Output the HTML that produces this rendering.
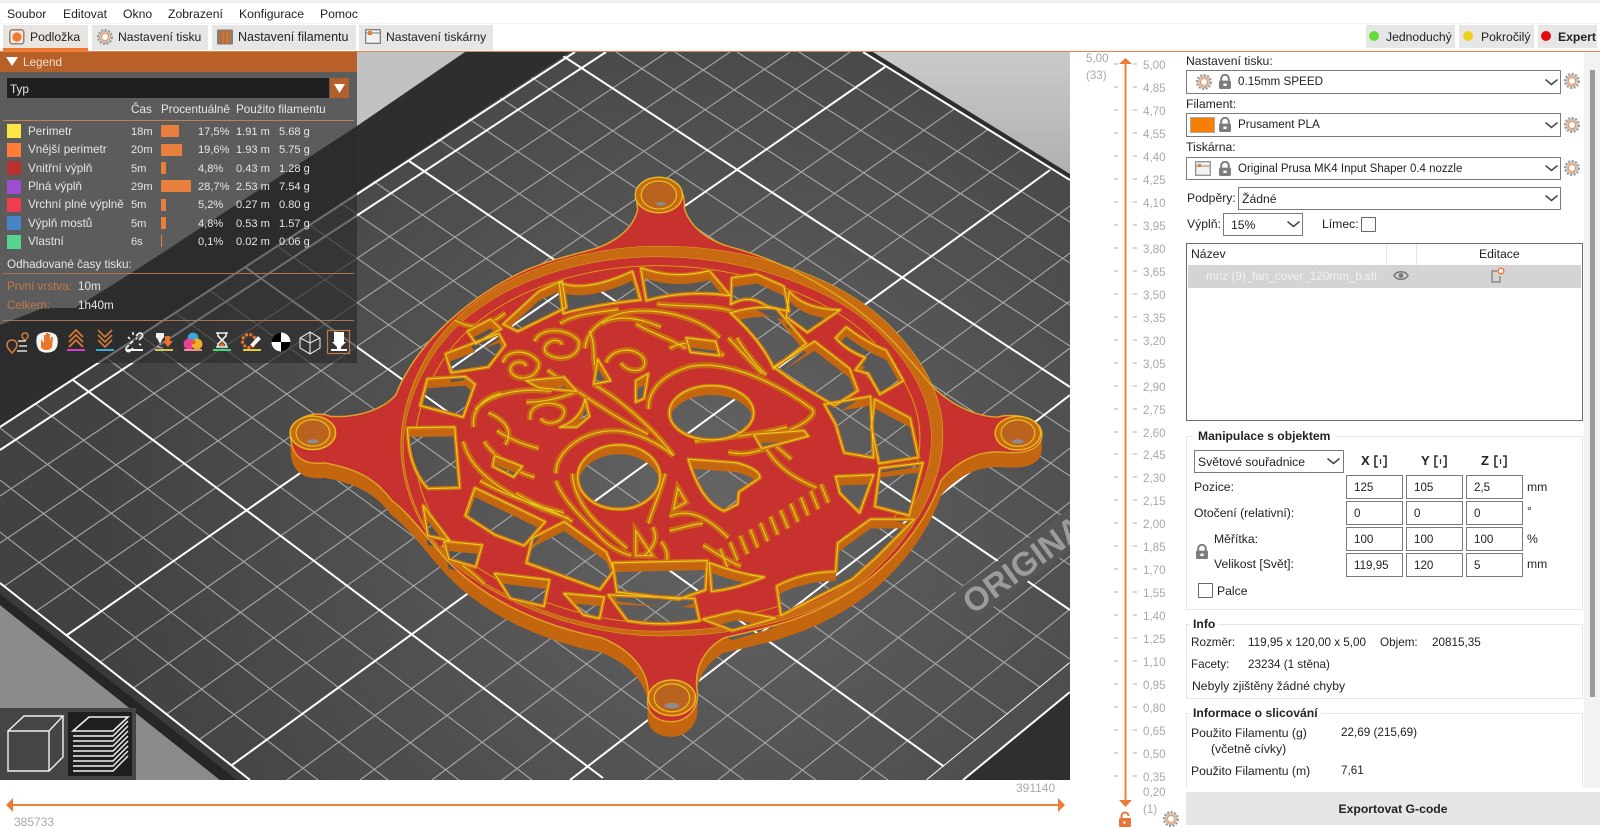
<!DOCTYPE html>
<html lang="cs"><head><meta charset="utf-8"><title>PrusaSlicer</title>
<style>
html,body{margin:0;padding:0;width:1600px;height:829px;overflow:hidden;background:#fff;font-family:"Liberation Sans",sans-serif;color:#222}
.t{position:absolute;white-space:nowrap;line-height:16px;font-size:12.2px}
.v{font-size:11.7px}
.b{position:absolute;box-sizing:border-box}
.combo{position:absolute;box-sizing:border-box;border:1px solid #7a7a7a;background:#fff}
.inp{position:absolute;box-sizing:border-box;border:1px solid #7a7a7a;width:57px;height:24px;font-size:11.6px;line-height:23px;padding-left:7px;background:#fff}
.lg{position:absolute;white-space:nowrap;line-height:14px;font-size:11.7px;color:#e6e6e6}
.n{font-size:11.1px}
.sw{position:absolute;left:7px;width:14px;height:14px}
.bar{position:absolute;left:161px;height:12px;background:#e97f3f}
svg{position:absolute;overflow:hidden}
.ns *{vector-effect:non-scaling-stroke}
</style></head><body>
<svg width="0" height="0" style="left:0;top:0"><defs>
<g id="gear"><circle cx="9" cy="9" r="7" fill="none" stroke="#9a9a9a" stroke-width="2" stroke-dasharray="2.2 1.4"/><circle cx="9" cy="9" r="5.4" fill="#f6e2d2" stroke="#9a9a9a" stroke-width=".7"/><circle cx="9" cy="9" r="3.7" fill="#fff" stroke="#ea9a66" stroke-width="1.4"/></g>
<g id="lock"><path d="M3.2 7V4.6a3.8 3.8 0 0 1 7.6 0V7" fill="none" stroke="#7d7d7d" stroke-width="2"/><rect x="1" y="6.6" width="12" height="8.4" rx="1.2" fill="#7d7d7d"/><rect x="5.4" y="9.6" width="3.2" height="2.4" fill="#fff"/></g>
<path id="chev" d="M0 0L6 5L12 0" fill="none" stroke="#444" stroke-width="1.5"/>
<g id="br"><path d="M4 1H1V12H4M9 1H12V12H9" fill="none" stroke="#333" stroke-width="1.6"/><path d="M6.5 4V9" stroke="#333" stroke-width="1.2"/></g>
</defs></svg>

<!-- menu -->
<div class="b" style="left:0;top:0;width:1600px;height:3px;background:#f0f0f0"></div>
<div class="b" style="left:0;top:23px;width:1600px;height:1px;background:#f3f3f3"></div>
<div class="t" style="left:7px;top:6px">Soubor</div>
<div class="t" style="left:63px;top:6px">Editovat</div>
<div class="t" style="left:123px;top:6px">Okno</div>
<div class="t" style="left:168px;top:6px">Zobrazení</div>
<div class="t" style="left:239px;top:6px">Konfigurace</div>
<div class="t" style="left:320px;top:6px">Pomoc</div>

<!-- tabs -->
<div class="b" style="left:3px;top:25px;width:85px;height:26px;background:#e8e4e0;border-bottom:3px solid #ee7a30"></div>
<div class="b" style="left:92px;top:25px;width:116px;height:25px;background:#e6e6e6"></div>
<div class="b" style="left:212px;top:25px;width:144px;height:25px;background:#e6e6e6"></div>
<div class="b" style="left:359px;top:25px;width:134px;height:25px;background:#e6e6e6"></div>
<svg style="left:9px;top:29px" width="16" height="16"><rect x=".8" y=".8" width="14" height="14" rx="2.5" fill="#f6e8dc" stroke="#8a7a70" stroke-width="1.4"/><circle cx="8" cy="8" r="4.6" fill="#ee7a30"/></svg>
<svg style="left:96px;top:28px" width="18" height="18"><use href="#gear"/></svg>
<svg style="left:217px;top:29px" width="16" height="16"><rect x="1" y="1" width="14" height="14" fill="#c9783f" stroke="#7d7d7d"/><path d="M4 1V15M8 1V15M12 1V15" stroke="#9a5a30" stroke-width=".7"/><rect x="0" y="1" width="2.5" height="14" fill="#7d7d7d"/><rect x="13.5" y="1" width="2.5" height="14" fill="#7d7d7d"/></svg>
<svg style="left:365px;top:29px" width="16" height="15"><rect x=".7" y=".7" width="14.6" height="13.6" fill="#f2f2f2" stroke="#777" stroke-width="1.2"/><path d="M1 4H15" stroke="#777"/><rect x="3" y="2" width="4" height="4" fill="#ee7a30"/></svg>
<div class="t" style="left:30px;top:29px">Podložka</div>
<div class="t" style="left:118px;top:29px">Nastavení tisku</div>
<div class="t" style="left:238px;top:29px;font-size:12.500px">Nastavení filamentu</div>
<div class="t" style="left:386px;top:29px">Nastavení tiskárny</div>

<!-- mode -->
<div class="b" style="left:1366px;top:25px;width:89px;height:23px;background:#e6e6e6"></div>
<div class="b" style="left:1459px;top:25px;width:75px;height:23px;background:#e6e6e6"></div>
<div class="b" style="left:1538px;top:25px;width:59px;height:23px;background:#e6e6e6"></div>
<svg style="left:1366px;top:25px" width="234" height="23"><circle cx="8" cy="11" r="5" fill="#66dc3a"/><circle cx="102" cy="11" r="5" fill="#ecd21a"/><circle cx="180" cy="11" r="5" fill="#e00c0c"/></svg>
<div class="t" style="left:1386px;top:29px">Jednoduchý</div>
<div class="t" style="left:1481px;top:29px">Pokročilý</div>
<div class="t" style="left:1558px;top:29px;font-weight:bold">Expert</div>
<div class="b" style="left:0;top:51px;width:1600px;height:1px;background:#ee7f45"></div>

<!-- canvas -->
<svg style="left:0;top:52px" width="1070" height="728" viewBox="0 52 1070 728">
<defs>
<radialGradient id="bed" gradientUnits="userSpaceOnUse" cx="720" cy="500" r="620"><stop offset="0" stop-color="#646464"/><stop offset=".5" stop-color="#525252"/><stop offset="1" stop-color="#424242"/></radialGradient>
<linearGradient id="gt" x1="0" y1="0" x2="0" y2="1"><stop offset="0" stop-color="#cacaca"/><stop offset="1" stop-color="#b0b0b0"/></linearGradient>
<path id="ring" d="M620 213C860 213 1060 320 1150 420C1240 520 1290 630 1290 740C1290 900 1200 1060 1075 1175C950 1270 780 1305 620 1305C420 1305 210 1200 100 1075C40 990 2 880 2 770C2 640 60 500 130 420C240 290 430 213 620 213Z"/>
<g id="sil" class="ns"><path d="M470 218C520 195 555 160 565 110C555 60 580 27 617 27C655 27 680 60 675 105C685 150 720 190 775 212C900 250 1060 340 1180 490C1210 530 1240 570 1260 600C1300 650 1360 690 1420 692C1450 680 1525 690 1525 740C1525 790 1470 795 1430 790C1370 785 1320 820 1285 870C1260 960 1190 1090 1075 1178C960 1265 860 1285 770 1310C725 1340 700 1390 705 1450C715 1510 680 1545 645 1545C610 1545 580 1520 590 1470C590 1400 550 1345 480 1310C350 1280 200 1210 100 1078C50 1010 20 960 -20 925C-60 860 -110 835 -180 820C-250 830 -260 775 -260 740C-260 700 -210 670 -165 690C-100 695 -40 670 -10 630C40 480 170 350 300 280C360 250 420 235 470 218Z"/></g>
<g id="wins" class="ns">
<path d="M378 315Q440 345 552 284L572 364Q470 376 388 402Z"/>
<path d="M572 274Q650 308 735 282L785 352Q680 335 585 366Z"/>
<path d="M788 302L848 292L912 326L924 396L872 382Q830 346 786 376Z"/>
<path d="M925 340Q960 390 1045 392L968 455L918 412Z"/>
<path d="M785 400Q850 378 895 388L965 486L888 556Q860 480 785 400Z"/>
<path d="M888 552L985 480L1068 556L1088 618L1032 660L940 596Z"/>
<path d="M1060 440Q1110 485 1155 505L1196 590L1140 628L1112 570L1082 560L1105 525Q1060 505 1035 470Z"/>
<path d="M245 432L330 340L385 310L395 385L280 452Z"/>
<path d="M160 452L215 418L240 445L180 486Z"/>
<path d="M108 515L235 458L250 490L210 552L122 568Z"/>
<path d="M65 585L155 578L178 600L150 692L48 660Z"/>
<path d="M18 722L130 720L142 890L66 892Q18 830 18 722Z"/>
<path d="M178 890L345 985L295 1052L226 1022L155 968Z"/>
<path d="M315 1030L390 985L490 1070L508 1122L475 1175L300 1100Z"/>
<path d="M55 940L118 1038L66 1024Z"/>
<path d="M105 1040L195 1050L180 1112L116 1090Z"/>
<path d="M225 1130L355 1148L342 1222L262 1200Z"/>
<path d="M390 1186L485 1196L474 1256L436 1246Z"/>
<path d="M495 1190L700 1200L712 1262Q620 1280 540 1262Z"/>
<path d="M735 1100Q800 1130 865 1140Q790 1176 740 1180Z"/>
<path d="M505 1100L730 1094L726 1176L662 1202L515 1182Z"/>
<path d="M895 1165Q960 1125 1035 1125L1040 1045L1118 978L1222 978L1135 1082L1075 1146L905 1248Z"/>
<path d="M1035 858L1125 854L1092 960L1045 905Z"/>
<path d="M1128 642L1212 695L1232 805L1138 822L1120 720Z"/>
<path d="M1008 656L1118 634L1125 806L1055 792L1035 712Z"/>
<path d="M1140 835L1242 820L1210 968L1128 942Z"/>
<path d="M720 1258L800 1235L892 1255L790 1290Z"/>
<path d="M422 860a98 90 0 1 0 196 0a98 90 0 1 0 -196 0Z"/>
<path d="M640 680a100 76 0 1 0 200 0a100 76 0 1 0 -200 0Z"/>
<path d="M685 810L800 820Q855 838 855 862L805 902L802 936L770 955Q715 930 685 810Z"/>
<path d="M225 800L290 830L270 860L220 830Z"/>
<path d="M300 590L390 580L420 620L330 610Z"/>
<path d="M380 720Q430 700 440 640L450 690L420 720Z"/>
<path d="M470 530L500 590L460 600Z"/>
<path d="M680 470L750 480L760 520L690 510Z"/>
<path d="M840 740L960 730L970 745L860 780Z"/>
<path d="M560 590L590 570L580 640L560 650Z"/>
</g>
<g id="decor" class="ns" fill="none">
<path d="M320 480C330 440 400 440 425 480C430 530 370 540 345 510C335 480 380 465 385 490"/>
<path d="M245 540C250 500 310 500 330 540C330 590 270 595 262 560C262 535 295 530 300 550"/>
<path d="M310 700C300 650 370 640 390 670C395 710 345 720 335 695"/>
<path d="M490 540C500 500 560 490 580 530C590 570 540 570 525 540"/>
<path d="M150 760C170 860 280 930 400 975"/>
<path d="M190 870C250 910 320 940 390 960"/>
<path d="M275 905C320 940 380 960 410 985"/>
<path d="M175 720C170 680 190 640 240 625"/>
<path d="M180 670C220 620 300 610 360 620"/>
<path d="M200 760C220 800 280 850 320 860"/>
<path d="M440 500C440 450 490 400 560 395C640 390 720 420 760 470"/>
<path d="M480 430C520 400 580 420 620 440"/>
<path d="M380 430C420 400 470 400 520 390"/>
<path d="M640 500C680 470 730 490 770 520"/>
<path d="M460 600C520 640 600 720 650 800"/>
<path d="M350 560C420 620 520 700 590 740"/>
<path d="M590 670C590 610 630 570 690 550C780 530 900 600 980 670C990 690 950 720 900 740"/>
<path d="M700 760C780 750 850 740 920 720"/>
<path d="M370 850C370 790 430 730 510 730C560 730 620 770 650 800"/>
<path d="M410 850C410 900 440 960 480 1000L540 1060"/>
<path d="M370 870C390 930 430 970 470 1020C490 1050 520 1070 550 1080"/>
<path d="M630 850C620 900 600 950 590 990"/>
<path d="M660 890L680 930L650 950Z"/>
<path d="M640 970C680 950 720 960 780 1030"/>
<path d="M640 1010C680 1000 700 990 720 990"/>
<path d="M870 780C900 840 950 870 990 890"/>
<path d="M890 770L930 810"/>
<path d="M780 790C820 800 840 790 870 780"/>
<path d="M610 375C680 385 750 375 800 400"/>
<path d="M800 470C820 510 850 550 870 575"/>
<path d="M780 470L860 570"/>
<path d="M560 1010L600 1080L560 1080Z"/>
<path d="M600 1000Q620 1040 580 1080"/>
<path d="M570 1120C600 1150 640 1130 620 1100"/>
<path d="M130 420C170 450 210 440 250 400"/>
<path d="M1110 570C1125 590 1140 590 1130 610"/>
<path d="M100 1050C130 1100 170 1120 200 1160"/>
<path d="M760 1060L778 1112M784 1042L802 1094M808 1024L826 1076M832 1006L850 1058M856 988L874 1040M880 970L898 1022M904 952L922 1004M928 934L946 986M952 916L970 968M976 898L994 950M1000 880L1018 932"/>
<path d="M720 1050C760 1080 790 1100 810 1110"/>
<path d="M450 450C470 500 450 560 480 590"/>
<path d="M560 430C600 460 640 470 680 500"/>
<path d="M420 620C380 640 340 650 300 650"/>
<path d="M210 680C250 700 270 730 250 770"/>
<path d="M230 730C270 760 300 770 330 780"/>
<path d="M620 1040C640 1070 640 1100 620 1110"/>
</g>
<clipPath id="bc"><polygon points="570,52 863,52 1070,180 1070,663 927,780 250,780 0,583 0,427"/></clipPath>
<mask id="mTop" maskUnits="userSpaceOnUse" x="-400" y="-100" width="2200" height="1800"><rect x="-400" y="-100" width="2200" height="1800" fill="#fff"/><use href="#wins" fill="#000"/></mask>
<mask id="mWall" maskUnits="userSpaceOnUse" x="-400" y="-100" width="2200" height="1800"><rect x="-400" y="-100" width="2200" height="1800" fill="#fff"/><use href="#wins" fill="#000" transform="translate(0,26)"/></mask>
</defs>
<rect x="0" y="52" width="1070" height="728" fill="#2e2e2e"/>
<polygon points="0,52 465,52 357,126 133,272 75,308 43,308 0,325" fill="#c2c2c2"/>
<polygon points="873,52 1070,174 1070,52" fill="url(#gt)"/>
<polygon points="0,605 220,780 0,780" fill="#8b8b8b"/>
<polygon points="0,583 250,780 220,780 0,605" fill="#262626"/>
<polygon points="0,583 250,780 237,780 0,594" fill="#3a3a3a"/>
<polygon points="570,52 863,52 1070,180 1070,692 963,780 250,780 0,583 0,427" fill="url(#bed)"/>
<polygon points="963,780 1070,692 1070,780" fill="#2f2f2f"/>
<!-- minors -->
<g clip-path="url(#bc)" stroke="#a8a8a8" stroke-width="1.1" fill="none">
<path d="M799 52L1070 222M737 52L1070 263M675 52L1070 305M616 52L1070 346M493 52L1070 432M431 52L1070 476M369 52L1070 521M309 52L1070 565M185 52L1070 659M123 52L1070 708M63 52L1070 758M3 52L1032 780M0 139L888 780M0 185L816 780M0 232L744 780M0 279L675 780M0 377L532 780M0 428L459 780M0 480L388 780M0 532L318 780"/>
<path d="M0 496L667 52M0 543L730 52M0 589L790 52M0 636L850 52M0 732L973 52M3 780L1035 52M74 780L1070 71M143 780L1070 115M287 780L1070 206M360 780L1070 253M432 780L1070 301M502 780L1070 348M645 780L1070 448M718 780L1070 502M790 780L1070 556M859 780L1070 609"/>
</g>
<!-- majors -->
<g clip-path="url(#bc)" stroke="#fff" stroke-width="2" fill="none">
<path d="M557 52L1070 387M409 161L1070 610M245 267L960 778M73 380L603 778"/>
<path d="M67 635L885 67M232 765L1050 170M570 780L1070 395M927 780L1070 663"/>
</g>
<g stroke="#fff" stroke-width="2" fill="none">
<path d="M575 52L0 427M606 52L0 450M863 52L1070 180M0 583L250 780M963 780L1070 692"/>
</g>
<!-- bed logo -->
<polygon points="955,592 1070,508 1070,550 978,618" fill="#565656"/>
<text x="973" y="615" transform="rotate(-36 973 615)" font-family="Liberation Sans" font-size="33" font-weight="bold" fill="#9a9d9d">ORIGINAL PRUSA</text>
<!-- object -->
<g transform="translate(400,170) scale(.4209,.3571)">
<g mask="url(#mWall)" fill="#c4660f">
<use href="#sil" transform="translate(0,14)"/><use href="#sil" transform="translate(0,28)"/><use href="#sil" transform="translate(0,42)"/><use href="#sil"/>
</g>
<g mask="url(#mTop)">
<use href="#sil" fill="#c8322e"/>
<use href="#ring" fill="#c76a12" stroke="#e8c020" stroke-width="1.2" vector-effect="non-scaling-stroke"/>
<use href="#ring" fill="#c8322e" stroke="#e0b020" stroke-width="1.2" transform="translate(6,38.500) scale(.974,.96)" vector-effect="non-scaling-stroke"/>
<use href="#ring" fill="#c8322e" stroke="#d0720f" stroke-width="3.400" transform="translate(33,73) scale(.932,.916)" vector-effect="non-scaling-stroke"/>
<use href="#ring" fill="none" stroke="#e6c81e" stroke-width="1" transform="translate(33,73) scale(.932,.916)" vector-effect="non-scaling-stroke"/>
<use href="#decor" stroke="#c96c10" stroke-width="6"/>
<use href="#decor" stroke="#e6c81e" stroke-width="1.200"/>
</g>
<use href="#wins" fill="none" stroke="#cf7410" stroke-width="4" stroke-linejoin="round"/>
<use href="#wins" fill="none" stroke="#e8d020" stroke-width="1.100" stroke-linejoin="round"/>
<use href="#sil" fill="none" stroke="#e0a222" stroke-width="1.500"/>
<g fill="#c76a12" stroke="#e6c020" stroke-width="1.400">
<ellipse cx="615" cy="70" rx="56" ry="50" vector-effect="non-scaling-stroke"/>
<ellipse cx="1468" cy="737" rx="54" ry="47" vector-effect="non-scaling-stroke"/>
<ellipse cx="-207" cy="736" rx="54" ry="47" vector-effect="non-scaling-stroke"/>
<ellipse cx="646" cy="1478" rx="56" ry="50" vector-effect="non-scaling-stroke"/>
</g>
<g fill="#b9631f" stroke="#e6c020" stroke-width="1.200">
<ellipse cx="615" cy="70" rx="42" ry="39" vector-effect="non-scaling-stroke"/>
<ellipse cx="1468" cy="737" rx="40" ry="37" vector-effect="non-scaling-stroke"/>
<ellipse cx="-207" cy="736" rx="40" ry="37" vector-effect="non-scaling-stroke"/>
<ellipse cx="646" cy="1478" rx="42" ry="39" vector-effect="non-scaling-stroke"/>
</g>
<g fill="#8d8d8d">
<ellipse cx="620" cy="95" rx="12" ry="5"/><ellipse cx="1468" cy="760" rx="14" ry="6"/><ellipse cx="-207" cy="760" rx="14" ry="6"/><ellipse cx="646" cy="1500" rx="18" ry="8"/>
</g>
</g>
<!-- view toggle -->
<rect x="0" y="708" width="136" height="72" fill="#454545"/>
<rect x="68" y="712" width="64" height="64" fill="#1f1f1f"/>
<g fill="none" stroke="#f2f2f2" stroke-width="1.4">
<path d="M8 731H49V771H8ZM8 731L24 716H63L49 731M63 716V757L49 771"/>
<path d="M73 731L89 717H128L113 731Z" stroke-width="1.6"/>
<path d="M73 736H113L128 721M73 741H113L128 726M73 746H113L128 731M73 751H113L128 736M73 756H113L128 741M73 761H113L128 746M73 766H113L128 751M73 771H113L128 756"/>
</g>
</svg>

<!-- legend -->
<div class="b" style="left:0;top:52px;width:357px;height:311px;background:rgba(44,44,44,.68)"></div>
<div class="b" style="left:0;top:52px;width:357px;height:20px;background:#b76027"></div>
<svg style="left:6px;top:56px" width="12" height="11"><path d="M0 1H12L6 10Z" fill="#fff"/></svg>
<div class="lg" style="left:23px;top:56px;color:#f0e0d6">Legend</div>
<div class="b" style="left:7px;top:78px;width:322px;height:20px;background:#202020"></div>
<div class="b" style="left:330px;top:78px;width:19px;height:20px;background:#b2602b"></div>
<svg style="left:334px;top:83px" width="12" height="11"><path d="M0 1H11L5.5 10Z" fill="#fff"/></svg>
<div class="lg" style="left:10px;top:83px">Typ</div>
<div class="lg" style="left:131px;top:103px">Čas</div>
<div class="lg" style="left:161px;top:103px">Procentuálně</div>
<div class="lg" style="left:236px;top:103px">Použito filamentu</div>
<div class="b" style="left:3px;top:120px;width:351px;height:1px;background:#c08050"></div>

<div class="sw" style="top:124px;background:#ffe646"></div><div class="lg" style="left:28px;top:125px">Perimetr</div><div class="lg n" style="left:131px;top:125px">18m</div><div class="bar" style="top:125px;width:18px"></div><div class="lg n" style="left:198px;top:125px">17,5%</div><div class="lg n" style="left:236px;top:125px">1.91 m</div><div class="lg n" style="left:279px;top:125px">5.68 g</div>
<div class="sw" style="top:143px;background:#ff7d38"></div><div class="lg" style="left:28px;top:143px">Vnější perimetr</div><div class="lg n" style="left:131px;top:143px">20m</div><div class="bar" style="top:144px;width:21px"></div><div class="lg n" style="left:198px;top:143px">19,6%</div><div class="lg n" style="left:236px;top:143px">1.93 m</div><div class="lg n" style="left:279px;top:143px">5.75 g</div>
<div class="sw" style="top:161px;background:#b83030"></div><div class="lg" style="left:28px;top:162px">Vnitřní výplň</div><div class="lg n" style="left:131px;top:162px">5m</div><div class="bar" style="top:162px;width:5px"></div><div class="lg n" style="left:198px;top:162px">4,8%</div><div class="lg n" style="left:236px;top:162px">0.43 m</div><div class="lg n" style="left:279px;top:162px">1.28 g</div>
<div class="sw" style="top:180px;background:#9a4fd0"></div><div class="lg" style="left:28px;top:180px">Plná výplň</div><div class="lg n" style="left:131px;top:180px">29m</div><div class="bar" style="top:180px;width:30px"></div><div class="lg n" style="left:198px;top:180px">28,7%</div><div class="lg n" style="left:236px;top:180px">2.53 m</div><div class="lg n" style="left:279px;top:180px">7.54 g</div>
<div class="sw" style="top:198px;background:#f03c4c"></div><div class="lg" style="left:28px;top:198px">Vrchní plné výplně</div><div class="lg n" style="left:131px;top:198px">5m</div><div class="bar" style="top:199px;width:5px"></div><div class="lg n" style="left:198px;top:198px">5,2%</div><div class="lg n" style="left:236px;top:198px">0.27 m</div><div class="lg n" style="left:279px;top:198px">0.80 g</div>
<div class="sw" style="top:216px;background:#4a84c8"></div><div class="lg" style="left:28px;top:217px">Výplň mostů</div><div class="lg n" style="left:131px;top:217px">5m</div><div class="bar" style="top:217px;width:5px"></div><div class="lg n" style="left:198px;top:217px">4,8%</div><div class="lg n" style="left:236px;top:217px">0.53 m</div><div class="lg n" style="left:279px;top:217px">1.57 g</div>
<div class="sw" style="top:235px;background:#55d490"></div><div class="lg" style="left:28px;top:235px">Vlastní</div><div class="lg n" style="left:131px;top:235px">6s</div><div class="bar" style="top:235px;width:1px"></div><div class="lg n" style="left:198px;top:235px">0,1%</div><div class="lg n" style="left:236px;top:235px">0.02 m</div><div class="lg n" style="left:279px;top:235px">0.06 g</div>

<div class="lg" style="left:7px;top:258px">Odhadované časy tisku:</div>
<div class="b" style="left:3px;top:273px;width:351px;height:1px;background:#a87650"></div>
<div class="lg" style="left:7px;top:280px;color:#c0784a">První vrstva:</div><div class="lg" style="left:78px;top:280px">10m</div>
<div class="lg" style="left:7px;top:299px;color:#c0784a">Celkem:</div><div class="lg" style="left:78px;top:299px">1h40m</div>
<div class="b" style="left:3px;top:320px;width:351px;height:1px;background:#a87650"></div>

<svg style="left:0;top:326px" width="357" height="32" viewBox="0 326 357 32">
<g fill="none" stroke="#d87a3e" stroke-width="1.5"><path d="M12 340c-3 0-5 2-5 5c0 3 5 8 5 8s5-5 5-8c0-3-2-5-5-5Z"/><path d="M25 333c-2 0-3 1-3 3c0 2 3 4 3 4s3-2 3-4c0-2-1-3-3-3Z"/></g><path d="M18 341H26M19 346H27M17 351H27" stroke="#ddd" stroke-width="1.4"/>
<path d="M37 336C40 331 52 331 56 335C59 339 58 347 55 350C50 354 42 353 39 350C36 346 36 340 37 336Z" fill="#f4f4f4"/><path d="M41 340V347C42 351 50 351 52 347L53 337H51L50 341V334H48V341V333H46V341V335H44V343L41 339Z" fill="#e8762c"/>
<path d="M69 342L76 335L83 342M69 347L76 340L83 347M69 337L76 330L83 337" fill="none" stroke="#e07b3a" stroke-width="1.6"/><rect x="67" y="349" width="18" height="2" fill="#d83ad0"/>
<path d="M98 331L105 338L112 331M98 336L105 343L112 336M98 341L105 348L112 341" fill="none" stroke="#d07a3a" stroke-width="1.6" transform="translate(0,-1)"/><rect x="96" y="349" width="18" height="2" fill="#3aa8dc"/>
<path d="M129 345l-2 2c-3 3 1 6 3 4l3-3M136 336l2-2c3-3 6 1 4 3l-3 3M133 341l-3 3M137 338l-1 1M128 337l2 2M133 332v3M141 345l-2-1" fill="none" stroke="#f2f2f2" stroke-width="1.6"/><rect x="126" y="349" width="17" height="2" fill="#f2f2f2"/>
<path d="M156 333h8v5h-1l-3 6l-3-6h-1Z" fill="#f2f2f2"/><path d="M165 336h5v5h3l-5 6l-5-6h2Z" fill="#e8762c"/><path d="M157 346c2 2 4 2 6 2" stroke="#ccc" fill="none"/><rect x="155" y="349" width="18" height="2" fill="#d8c060"/>
<circle cx="193" cy="338" r="5.4" fill="#3aa8dc"/><circle cx="189" cy="344" r="5.4" fill="#e8409a"/><circle cx="197" cy="344" r="5.4" fill="#f0b02a"/><circle cx="193" cy="342" r="2.4" fill="#e06030"/><rect x="184" y="349" width="18" height="2" fill="#e89090"/>
<path d="M216 333H228M216 347H228M218 333V336L222 340L218 344V347M226 333V336L222 340L226 344V347" fill="none" stroke="#eee" stroke-width="1.6"/><path d="M219 346L222 342L225 346Z" fill="#e8762c"/><rect x="213" y="349" width="18" height="2" fill="#40d870"/>
<circle cx="249" cy="341" r="6.500" fill="none" stroke="#e8762c" stroke-width="3" stroke-dasharray="3 1.4"/><path d="M250 345L258 336L261 339L253 347Z" fill="#f4f4f4"/><rect x="243" y="349" width="18" height="2" fill="#e8c840"/>
<circle cx="281" cy="342" r="9.500" fill="#fff"/><path d="M281 342V332.500A9.500 9.500 0 0 0 271.500 342ZM281 342V351.500A9.500 9.500 0 0 0 290.500 342Z" fill="#000"/>
<path d="M310 332L320 338V348L310 354L300 348V338ZM310 332V343M300 338L310 343L320 338M310 343V354" fill="none" stroke="#e6e6e6" stroke-width="1.1"/>
<rect x="327.500" y="330.500" width="22" height="23" fill="none" stroke="#c07a4a" stroke-width="1.2"/><path d="M334 332h10v10h2l-5 5v2h-4v-2l-5-5h2Z" fill="#fff"/><rect x="331" y="349" width="16" height="2" fill="#fff"/>
</svg>

<!-- horizontal slider -->
<svg style="left:0;top:780px" width="1100" height="49" viewBox="0 780 1100 49">
<path d="M12 805H1062" stroke="#ee8040" stroke-width="2"/><path d="M6 805L13 798V812Z" fill="#ee7a38"/><path d="M1065 805L1058 798V812Z" fill="#ee7a38"/>
<text x="14" y="826" font-family="Liberation Sans" font-size="12" fill="#a8a8a8">385733</text>
<text x="1016" y="792" font-family="Liberation Sans" font-size="12" fill="#a8a8a8">391140</text>
</svg>

<!-- vertical slider -->
<svg style="left:1070px;top:52px" width="116" height="777" viewBox="1070 52 116 777" font-family="Liberation Sans" font-size="11.6" fill="#a8a8a8">
<path d="M1125.500 64V803" stroke="#ee8040" stroke-width="2"/>
<path d="M1125.500 58L1132 64H1119Z" fill="#ee7a38"/><path d="M1125.500 807L1119 800H1132Z" fill="#ee7a38"/>
<path d="M1114 64h4M1133 64h4M1114 87h4M1133 87h4M1114 110h4M1133 110h4M1114 133h4M1133 133h4M1114 156h4M1133 156h4M1114 179h4M1133 179h4M1114 202h4M1133 202h4M1114 225h4M1133 225h4M1114 248h4M1133 248h4M1114 271h4M1133 271h4M1114 294h4M1133 294h4M1114 317h4M1133 317h4M1114 340h4M1133 340h4M1114 363h4M1133 363h4M1114 386h4M1133 386h4M1114 409h4M1133 409h4M1114 432h4M1133 432h4M1114 454h4M1133 454h4M1114 477h4M1133 477h4M1114 500h4M1133 500h4M1114 523h4M1133 523h4M1114 546h4M1133 546h4M1114 569h4M1133 569h4M1114 592h4M1133 592h4M1114 615h4M1133 615h4M1114 638h4M1133 638h4M1114 661h4M1133 661h4M1114 684h4M1133 684h4M1114 707h4M1133 707h4M1114 730h4M1133 730h4M1114 753h4M1133 753h4M1114 776h4M1133 776h4" stroke="#b0b0b0" stroke-width="1"/>
<text x="1086" y="62">5,00</text><text x="1086" y="79">(33)</text>
<text x="1143" y="69">5,00</text><text x="1143" y="92">4,85</text><text x="1143" y="115">4,70</text><text x="1143" y="138">4,55</text><text x="1143" y="161">4,40</text><text x="1143" y="184">4,25</text><text x="1143" y="207">4,10</text><text x="1143" y="230">3,95</text><text x="1143" y="253">3,80</text><text x="1143" y="276">3,65</text><text x="1143" y="299">3,50</text><text x="1143" y="322">3,35</text><text x="1143" y="345">3,20</text><text x="1143" y="368">3,05</text><text x="1143" y="391">2,90</text><text x="1143" y="414">2,75</text><text x="1143" y="437">2,60</text><text x="1143" y="459">2,45</text><text x="1143" y="482">2,30</text><text x="1143" y="505">2,15</text><text x="1143" y="528">2,00</text><text x="1143" y="551">1,85</text><text x="1143" y="574">1,70</text><text x="1143" y="597">1,55</text><text x="1143" y="620">1,40</text><text x="1143" y="643">1,25</text><text x="1143" y="666">1,10</text><text x="1143" y="689">0,95</text><text x="1143" y="712">0,80</text><text x="1143" y="735">0,65</text><text x="1143" y="758">0,50</text><text x="1143" y="781">0,35</text><text x="1143" y="796">0,20</text><text x="1143" y="813">(1)</text>
<g transform="translate(1119,812)"><path d="M2.500 6V4a3.500 3.500 0 0 1 7 0" fill="none" stroke="#e8763a" stroke-width="2"/><rect x="0" y="6" width="12" height="9" rx="1" fill="#e8763a"/><path d="M4.500 9l3 1.500l-3 1.500Z" fill="#fff"/></g>
<g transform="translate(1162,810)"><use href="#gear"/></g>
</svg>

<!-- right panel -->
<div class="b" style="left:1584px;top:52px;width:16px;height:736px;background:#f2f2f2"></div>
<div class="b" style="left:1590px;top:70px;width:5px;height:627px;background:#9a9a9a"></div>

<div class="t" style="left:1186px;top:53px">Nastavení tisku:</div>
<div class="combo" style="left:1186px;top:70px;width:375px;height:24px"></div>
<svg style="left:1194px;top:72px" width="20" height="20"><use href="#gear" x="1" y="1"/></svg>
<svg style="left:1218px;top:74px" width="14" height="16"><use href="#lock"/></svg>
<div class="t v" style="left:1238px;top:74px">0.15mm SPEED</div>
<svg style="left:1545px;top:79px" width="13" height="7"><use href="#chev" x=".5" y=".5"/></svg>
<svg style="left:1563px;top:72px" width="18" height="18"><use href="#gear"/></svg>

<div class="t" style="left:1186px;top:96px">Filament:</div>
<div class="combo" style="left:1186px;top:113px;width:375px;height:24px"></div>
<div class="b" style="left:1190px;top:117px;width:25px;height:16px;background:#f87f06;border:1px solid #aaa"></div>
<svg style="left:1218px;top:117px" width="14" height="16"><use href="#lock"/></svg>
<div class="t v" style="left:1238px;top:117px">Prusament PLA</div>
<svg style="left:1545px;top:122px" width="13" height="7"><use href="#chev" x=".5" y=".5"/></svg>
<svg style="left:1563px;top:116px" width="18" height="18"><use href="#gear"/></svg>

<div class="t" style="left:1186px;top:139px">Tiskárna:</div>
<div class="combo" style="left:1186px;top:157px;width:375px;height:23px"></div>
<svg style="left:1195px;top:161px" width="16" height="15"><rect x=".7" y=".7" width="14.6" height="13.6" fill="#f2f2f2" stroke="#888" stroke-width="1.2"/><path d="M1 5H15" stroke="#888"/><rect x="3" y="3" width="3" height="3" fill="#ee7a30"/></svg>
<svg style="left:1218px;top:161px" width="14" height="16"><use href="#lock"/></svg>
<div class="t" style="left:1238px;top:161px;font-size:11.5px">Original Prusa MK4 Input Shaper 0.4 nozzle</div>
<svg style="left:1545px;top:165px" width="13" height="7"><use href="#chev" x=".5" y=".5"/></svg>
<svg style="left:1563px;top:159px" width="18" height="18"><use href="#gear"/></svg>

<div class="t" style="left:1187px;top:190px">Podpěry:</div>
<div class="combo" style="left:1238px;top:187px;width:323px;height:23px"></div>
<div class="t" style="left:1242px;top:191px">Žádné</div>
<svg style="left:1545px;top:195px" width="13" height="7"><use href="#chev" x=".5" y=".5"/></svg>

<div class="t" style="left:1187px;top:216px">Výplň:</div>
<div class="combo" style="left:1223px;top:213px;width:80px;height:23px"></div>
<div class="t" style="left:1231px;top:217px">15%</div>
<svg style="left:1287px;top:221px" width="13" height="7"><use href="#chev" x=".5" y=".5"/></svg>
<div class="t" style="left:1322px;top:216px">Límec:</div>
<div class="b" style="left:1361px;top:217px;width:15px;height:15px;border:1px solid #666;border-radius:1px"></div>

<div class="combo" style="left:1186px;top:243px;width:397px;height:178px;border-color:#6a6a6a"></div>
<div class="b" style="left:1386px;top:244px;width:1px;height:21px;background:#e4e4e4"></div>
<div class="b" style="left:1416px;top:244px;width:1px;height:21px;background:#e4e4e4"></div>
<div class="t" style="left:1191px;top:246px">Název</div>
<div class="t" style="left:1479px;top:246px">Editace</div>
<div class="b" style="left:1188px;top:265px;width:393px;height:23px;background:#d4d4d4"></div>
<div class="t v" style="left:1206px;top:269px;color:#f2f2f2">mriz (9)_fan_cover_120mm_b.stl</div>
<svg style="left:1393px;top:269px" width="16" height="13"><path d="M1 6.500C4 1.500 12 1.500 15 6.500C12 11.500 4 11.500 1 6.500Z" fill="none" stroke="#777" stroke-width="1.5"/><circle cx="8" cy="6.500" r="2.400" fill="#777"/></svg>
<svg style="left:1490px;top:267px" width="16" height="17"><path d="M7 4H2V15H10V9" fill="none" stroke="#888" stroke-width="1.400"/><circle cx="11" cy="4" r="2.800" fill="#fff" stroke="#ee7a30" stroke-width="1.500"/></svg>

<!-- Manipulace -->
<div class="b" style="left:1186px;top:436px;width:397px;height:174px;border:1px solid #e6e6e6"></div>
<div class="t" style="left:1193px;top:428px;font-weight:bold;font-size:12.1px;background:#fff;padding:0 5px">Manipulace s objektem</div>
<div class="combo" style="left:1194px;top:450px;width:150px;height:23px"></div>
<div class="t" style="left:1198px;top:454px">Světové souřadnice</div>
<svg style="left:1327px;top:458px" width="13" height="7"><use href="#chev" x=".5" y=".5"/></svg>
<div class="t" style="left:1361px;top:453px;font-weight:bold;font-size:13px">X</div>
<svg style="left:1374px;top:455px" width="14" height="13"><use href="#br"/></svg>
<div class="t" style="left:1421px;top:453px;font-weight:bold;font-size:13px">Y</div>
<svg style="left:1434px;top:455px" width="14" height="13"><use href="#br"/></svg>
<div class="t" style="left:1481px;top:453px;font-weight:bold;font-size:13px">Z</div>
<svg style="left:1494px;top:455px" width="14" height="13"><use href="#br"/></svg>

<div class="t" style="left:1194px;top:479px">Pozice:</div>
<div class="inp" style="left:1346px;top:475px">125</div><div class="inp" style="left:1406px;top:475px">105</div><div class="inp" style="left:1466px;top:475px">2,5</div>
<div class="t" style="left:1527px;top:479px">mm</div>
<div class="t" style="left:1194px;top:505px">Otočení (relativní):</div>
<div class="inp" style="left:1346px;top:501px">0</div><div class="inp" style="left:1406px;top:501px">0</div><div class="inp" style="left:1466px;top:501px">0</div>
<div class="t" style="left:1527px;top:503px">°</div>
<div class="t" style="left:1214px;top:531px">Měřítka:</div>
<div class="inp" style="left:1346px;top:527px">100</div><div class="inp" style="left:1406px;top:527px">100</div><div class="inp" style="left:1466px;top:527px">100</div>
<div class="t" style="left:1527px;top:531px">%</div>
<div class="t" style="left:1214px;top:556px">Velikost [Svět]:</div>
<div class="inp" style="left:1346px;top:553px">119,95</div><div class="inp" style="left:1406px;top:553px">120</div><div class="inp" style="left:1466px;top:553px">5</div>
<div class="t" style="left:1527px;top:556px">mm</div>
<svg style="left:1195px;top:544px" width="14" height="16"><use href="#lock"/></svg>
<div class="b" style="left:1198px;top:583px;width:15px;height:15px;border:1px solid #666;border-radius:1px"></div>
<div class="t" style="left:1217px;top:583px">Palce</div>

<!-- Info -->
<div class="b" style="left:1186px;top:624px;width:397px;height:75px;border:1px solid #e6e6e6"></div>
<div class="t" style="left:1190px;top:616px;font-weight:bold;background:#fff;padding:0 3px">Info</div>
<div class="t v" style="left:1191px;top:635px">Rozměr:</div><div class="t v" style="left:1248px;top:635px">119,95 x 120,00 x 5,00</div>
<div class="t v" style="left:1380px;top:635px">Objem:</div><div class="t v" style="left:1432px;top:635px">20815,35</div>
<div class="t v" style="left:1191px;top:657px">Facety:</div><div class="t v" style="left:1248px;top:657px">23234 (1 stěna)</div>
<div class="t" style="left:1192px;top:678px">Nebyly zjištěny žádné chyby</div>

<!-- slicing -->
<div class="b" style="left:1186px;top:713px;width:397px;height:74px;border:1px solid #e6e6e6;border-bottom:0"></div>
<div class="t" style="left:1190px;top:705px;font-weight:bold;background:#fff;padding:0 3px">Informace o slicování</div>
<div class="t" style="left:1191px;top:725px">Použito Filamentu (g)</div><div class="t v" style="left:1341px;top:725px">22,69 (215,69)</div>
<div class="t" style="left:1211px;top:741px">(včetně cívky)</div>
<div class="t" style="left:1191px;top:763px">Použito Filamentu (m)</div><div class="t v" style="left:1341px;top:763px">7,61</div>

<div class="b" style="left:1186px;top:792px;width:414px;height:33px;background:#e6e6e6"></div>
<div class="t" style="left:1186px;top:801px;width:414px;text-align:center;font-weight:bold">Exportovat G-code</div>
</body></html>
